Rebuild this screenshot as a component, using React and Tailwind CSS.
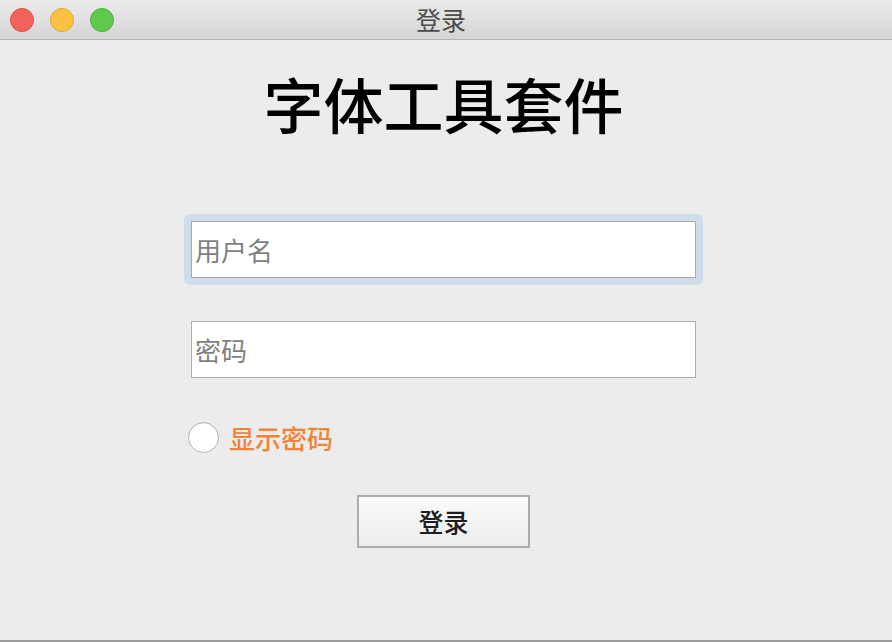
import React, { useState } from 'react';

const font = { fontFamily: '"Noto Sans CJK SC", "Noto Sans", sans-serif' };

const TrafficLights = () => (
  <div className="flex items-center gap-4 pl-[10px]">
    <span className="w-6 h-6 rounded-full bg-[#f0635b] border border-[#de4d45]" />
    <span className="w-6 h-6 rounded-full bg-[#fbc142] border border-[#e0a530]" />
    <span className="w-6 h-6 rounded-full bg-[#5fc94d] border border-[#4aae3a]" />
  </div>
);

const LoginWindow = () => {
  const [showPassword, setShowPassword] = useState(false);

  return (
    <div className="w-[892px] h-[642px] flex flex-col bg-[#ececec] overflow-hidden" style={font}>
      {/* title bar */}
      <div className="relative h-10 shrink-0 flex items-center bg-gradient-to-b from-[#ebebeb] to-[#d5d5d5] border-b border-[#b3b3b3]">
        <TrafficLights />
        <div className="absolute inset-0 pr-[10px] flex items-center justify-center text-[25px] text-[#4b4b4b] leading-none pointer-events-none">
          登录
        </div>
      </div>

      <div className="flex-1 flex flex-col items-center pr-[5px] border-b-2 border-[#9c9c9c]">
        <h1 className="mt-[33px] text-[60px] leading-[60px] text-black font-medium">字体工具套件</h1>

        <div className="mt-[81px] w-[519px] p-[7px] rounded-[6px] bg-[#cfdcec]">
          <input
            className="block w-full h-[57px] bg-white border border-[#a9a9a9] px-[3px] text-[26px] text-[#333] placeholder:text-[#7f7f7f] outline-none"
            placeholder="用户名"
            style={font}
          />
        </div>

        <div className="mt-[29px] w-[519px] p-[7px]">
          <input
            type={showPassword ? 'text' : 'password'}
            className="block w-full h-[57px] bg-white border border-[#adadad] px-[3px] text-[26px] text-[#333] placeholder:text-[#7f7f7f] outline-none"
            placeholder="密码"
            style={font}
          />
        </div>

        <label className="mt-[37px] w-[519px] pl-[4px] flex items-center gap-[10px] cursor-pointer">
          <span
            onClick={() => setShowPassword(!showPassword)}
            className="w-[31px] h-[31px] rounded-full bg-white border border-[#b4b4b4] shadow-[inset_0_1px_1px_rgba(0,0,0,0.05)]"
          />
          <span className="text-[26px] leading-none text-[#f0843c] font-medium">显示密码</span>
        </label>

        <button className="mt-[42px] w-[173px] h-[53px] border-2 border-[#acacac] bg-gradient-to-b from-[#fbfbfb] to-[#ececec] text-[25px] text-[#1e1e1e] font-medium leading-none">
          登录
        </button>
      </div>
    </div>
  );
};

export default function App() {
  return <LoginWindow />;
}
